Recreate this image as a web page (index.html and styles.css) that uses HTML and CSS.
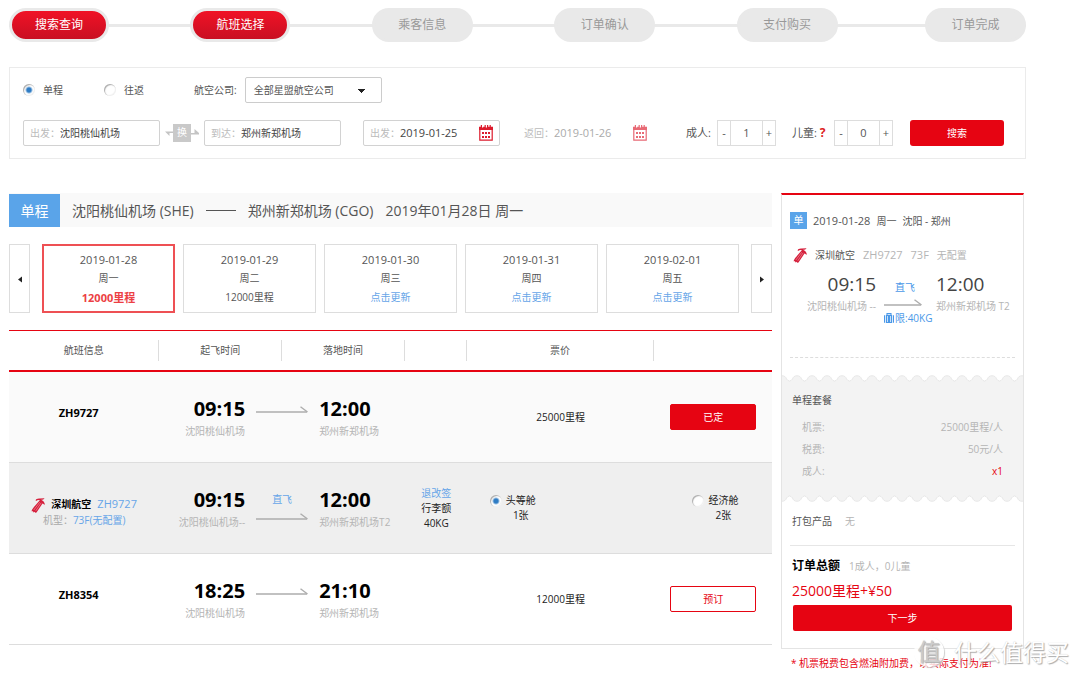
FILE: index.html
```html
<!DOCTYPE html>
<html lang="zh-CN">
<head>
<meta charset="utf-8">
<title>航班选择</title>
<link rel="stylesheet" href="styles.css">
</head>
<body>
<svg class="defs" aria-hidden="true">
  <symbol id="arrow" viewBox="0 0 52 8" preserveAspectRatio="xMaxYMid slice"><path d="M0 6h51" stroke="#adadad" stroke-width="1.6"/><path d="M44.500 .8l7 5.200" stroke="#adadad" stroke-width="1.400"/></symbol>
  <symbol id="logo" viewBox="0 0 14 15"><path d="M5 3C4 1.500 6 .3 8.500 .5L13.500 .3C13 1.500 11.500 1.800 10 1.800 12 2.500 14 4.500 13.800 6.800 13 6.500 12.500 5.800 11.500 5.500L5.500 14.500 4 14.800 3.800 13.800 2.500 14.500 2 13.200.5 13.300C1 11 3 9 4.500 7.200L8.800 2.200C7.500 1.800 6.200 2.200 5 3Z" fill="#d5203c"/><path d="M8.800 4.200L2.800 12M10.200 4.800L4.800 12.800" stroke="#f4a5af" stroke-width=".6"/></symbol>
  <symbol id="cal" viewBox="0 0 14 16"><path d="M.8 4v11.200h12.400V4" fill="none" stroke="#dc1b2c" stroke-width="1.200"/><path d="M0 1.800h1.800V0h1.200v2.500h1.200V1.800h1.400V0h1.200v2.500H8V0h1.200v1.800h1.400V0h1.200v1.800H14V5H0z" fill="#dc1b2c"/><path d="M3 7h2v2H3zM6 7h2v2H6zM9 7h2v2H9zM3 11h2v2H3zM6 11h2v2H6zM9 11h2v2H9z" fill="#dc1b2c"/></symbol>
</svg>
<div class="page">
  <ol class="steps">
    <li class="step done">搜索查询</li>
    <li class="step done">航班选择</li>
    <li class="step">乘客信息</li>
    <li class="step">订单确认</li>
    <li class="step">支付购买</li>
    <li class="step last">订单完成</li>
  </ol>

  <form class="search">
    <div class="search-row">
      <label class="trip"><input class="radio" type="radio" name="trip" checked>单程</label>
      <label class="trip"><input class="radio" type="radio" name="trip">往返</label>
      <label class="airline-label" for="airline">航空公司:</label>
      <select id="airline" class="airline"><option>全部星盟航空公司</option></select>
    </div>
    <div class="search-row">
      <label class="field"><span>出发：</span><input type="text" value="沈阳桃仙机场"></label>
      <button class="swap" type="button"><svg viewBox="0 0 8 8"><path d="M0 2.500h8V4H4.500V7z"/></svg><span>换</span><svg viewBox="0 0 8 8"><path d="M0 4h3.500V0L8 4v1.500H0z"/></svg></button>
      <label class="field"><span>到达：</span><input type="text" value="郑州新郑机场"></label>
      <label class="field depart"><span>出发：</span><input class="date" type="text" value="2019-01-25"><svg class="cal"><use href="#cal"/></svg></label>
      <label class="field return"><span>返回：</span><input class="date" type="text" value="2019-01-26" disabled><svg class="cal"><use href="#cal"/></svg></label>
      <label class="count-label" for="adults">成人:</label>
      <div class="stepper"><button type="button">-</button><input id="adults" type="text" value="1"><button type="button">+</button></div>
      <label class="count-label child" for="children">儿童: <b>?</b></label>
      <div class="stepper"><button type="button">-</button><input id="children" type="text" value="0"><button type="button">+</button></div>
      <button class="submit" type="submit">搜索</button>
    </div>
  </form>

  <div class="content">
    <main class="results">
      <h1 class="route"><span class="route-tag">单程</span><span>沈阳桃仙机场 (SHE)</span><i class="dash"></i><span>郑州新郑机场 (CGO)</span><span>2019年01月28日 周一</span></h1>

      <div class="dates">
        <button class="page-btn" type="button" aria-label="前一周"><svg viewBox="0 0 4 6"><path d="M4 0v6L0 3z"/></svg></button>
        <div class="days">
          <button class="day active" type="button"><span>2019-01-28</span>周一<b>12000里程</b></button>
          <button class="day" type="button"><span>2019-01-29</span>周二<em>12000里程</em></button>
          <button class="day" type="button"><span>2019-01-30</span>周三<em class="blue">点击更新</em></button>
          <button class="day" type="button"><span>2019-01-31</span>周四<em class="blue">点击更新</em></button>
          <button class="day" type="button"><span>2019-02-01</span>周五<em class="blue">点击更新</em></button>
        </div>
        <button class="page-btn" type="button" aria-label="后一周"><svg viewBox="0 0 4 6"><path d="M0 0v6l4-3z"/></svg></button>
      </div>

      <table class="flights">
        <colgroup><col class="c-info"><col class="c-time"><col class="c-time"><col class="c-bag"><col class="c-price"><col class="c-act"></colgroup>
        <thead>
          <tr><th><span>航班信息</span></th><th><span>起飞时间</span></th><th><span>落地时间</span></th><th><span>&nbsp;</span></th><th><span>票价</span></th><th></th></tr>
        </thead>
        <tbody>
          <tr class="chosen">
            <td class="number">ZH9727</td>
            <td colspan="2"><div class="leg"><div class="dep"><b>09:15</b>沈阳桃仙机场</div><div class="mid"><svg class="arrow"><use href="#arrow"/></svg></div><div class="arr"><b>12:00</b>郑州新郑机场</div></div></td>
            <td></td>
            <td class="price">25000里程</td>
            <td><button class="book solid" type="button">已定</button></td>
          </tr>
          <tr class="detail">
            <td class="plane"><svg class="logo"><use href="#logo"/></svg><strong>深圳航空</strong><a href="#">ZH9727</a><div>机型：<a href="#">73F(无配置)</a></div></td>
            <td colspan="2"><div class="leg"><div class="dep"><b>09:15</b>沈阳桃仙机场--</div><div class="mid direct"><span>直飞</span><svg class="arrow"><use href="#arrow"/></svg></div><div class="arr"><b>12:00</b>郑州新郑机场T2</div></div></td>
            <td class="bag"><a href="#">退改签</a><br>行李额<br>40KG</td>
            <td class="cabin first"><label><input class="radio" type="radio" name="cabin" checked><span>头等舱<br>1张</span></label></td>
            <td class="cabin"><label><input class="radio" type="radio" name="cabin"><span>经济舱<br>2张</span></label></td>
          </tr>
          <tr>
            <td class="number">ZH8354</td>
            <td colspan="2"><div class="leg"><div class="dep"><b>18:25</b>沈阳桃仙机场</div><div class="mid"><svg class="arrow"><use href="#arrow"/></svg></div><div class="arr"><b>21:10</b>郑州新郑机场</div></div></td>
            <td></td>
            <td class="price">12000里程</td>
            <td><button class="book" type="button">预订</button></td>
          </tr>
        </tbody>
      </table>
    </main>

    <aside class="side">
      <section class="summary">
        <div class="sum-head"><span class="tag">单</span><span class="num">2019-01-28</span><span>周一</span><span>沈阳 - 郑州</span></div>
        <div class="sum-air"><svg class="logo"><use href="#logo"/></svg><span class="name">深圳航空</span><span class="num">ZH9727</span><span class="num">73F</span><span>无配置</span></div>
        <div class="sum-leg">
          <div class="dep"><b>09:15</b>沈阳桃仙机场 --</div>
          <div class="mid"><span>直飞</span><svg class="arrow"><use href="#arrow"/></svg><span class="limit"><svg viewBox="0 0 10 10"><path d="M3 2V.6h4V2" fill="none" stroke="#4a98e8" stroke-width="1.100"/><path d="M0 3q0-1 1-1v8q-1 0-1-1zM1.800 2h6.400v8H1.800zM9 2q1 0 1 1v6q0 1-1 1z" fill="#4a98e8"/><path d="M3.500 3v6M6.500 3v6" stroke="#fff" stroke-width=".7"/></svg>限:40KG</span></div>
          <div class="arr"><b>12:00</b>郑州新郑机场 T2</div>
        </div>
        <hr class="dashed">
        <svg class="wave"><defs><pattern id="scallop" width="15" height="7" patternUnits="userSpaceOnUse"><path d="M-1 .6C2.500 .6 4 2 4.500 4Q7.500 8 10.500 4C11 2 12.500 .6 16 .6V9H-1Z" fill="#f3f3f3" stroke="#e2e2e2" stroke-width=".8"/></pattern></defs><rect width="100%" height="7" fill="url(#scallop)"/></svg>
        <div class="package">
          <h2>单程套餐</h2>
          <dl>
            <div><dt>机票:</dt><dd>25000里程/人</dd></div>
            <div><dt>税费:</dt><dd>50元/人</dd></div>
            <div><dt>成人:</dt><dd class="red">x1</dd></div>
          </dl>
        </div>
        <svg class="wave flip"><rect width="100%" height="7" fill="url(#scallop)"/></svg>
        <p class="extras">打包产品<span>无</span></p>
        <hr class="solid-line">
        <p class="total"><strong>订单总额</strong><span>1成人，0儿童</span></p>
        <p class="amount">25000里程+¥50</p>
        <button class="next" type="button">下一步</button>
      </section>
      <p class="note">* 机票税费包含燃油附加费，以实际支付为准!</p>
    </aside>
  </div>
</div>
<div class="watermark"><span class="seal">值</span><span>什么值得买</span></div>
</body>
</html>
```
FILE: styles.css
```css
* { box-sizing: border-box; }
body {
  margin: 0;
  position: relative;
  background: #fff;
  color: #555;
  font: 10px/16px "Open Sans", "Noto Sans CJK SC", sans-serif;
}
button, input, select { font: inherit; color: inherit; margin: 0; padding: 0; border: 0; background: none; }
button { cursor: pointer; }
a { color: #66a5e8; text-decoration: none; }
p, h1, h2, dl, dd, ol { margin: 0; padding: 0; }
em { font-style: normal; }
.defs { position: absolute; width: 0; height: 0; }
.page { padding: 8px 54px 0 9px; }
.blue { color: #66a5e8; }

/* progress */
.steps { display: flex; justify-content: space-between; list-style: none; background: linear-gradient(#e9e9e9, #e9e9e9) center / 100% 3px no-repeat; }
.step { width: 101px; height: 34px; border: 3px solid #e9e9e9; border-radius: 17px; background: #e9e9e9; color: #999; font-size: 12px; line-height: 28px; text-align: center; }
.step.done { width: 100px; background: linear-gradient(#f01226, #c90f22); color: #fff; }
.step.last { margin-left: 6px; }

/* search */
.search { margin-top: 25px; padding: 9px 21px 12px 13px; border: 1px solid #ebebeb; }
.search-row { display: flex; align-items: center; }
.search-row + .search-row { margin-top: 17px; }
.radio { appearance: none; flex: none; width: 12px; height: 12px; border-radius: 50%; background: #fff; box-shadow: inset 1px 1px 1px #aaa, inset -1px -1px 1px #f0f0f0; }
.radio:checked { background: radial-gradient(circle, #2f7cc4 0 2px, #fff 4px); }
.trip { display: flex; align-items: center; gap: 8px; width: 81px; }
.airline-label { margin: 0 8px 0 9px; }
.airline { appearance: none; width: 137px; height: 26px; padding: 0 8px; border: 1px solid #ccc; border-radius: 2px; background: linear-gradient(to bottom right, #222 50%, transparent 50%) 116px 11px / 4px 4px no-repeat, linear-gradient(to bottom left, #222 50%, transparent 50%) 112px 11px / 4px 4px no-repeat; }
.field { display: flex; align-items: center; width: 137px; height: 26px; padding: 0 6px; border: 1px solid #d2d2d2; border-radius: 2px; color: #bbb; }
.field span { flex: none; width: 30px; }
.field input { flex: 1; min-width: 0; color: #444; }
.field .date, .num, .day span { font-size: 11px; }
.cal { flex: none; width: 14px; height: 16px; }
.depart { margin-left: 22px; }
.return { margin-left: 17px; border-color: transparent; }
.return input { color: #aaa; }
.return .cal { opacity: .65; }
.swap { display: flex; align-items: center; width: 44px; justify-content: center; }
.swap span { width: 18px; height: 18px; background: #c9c9c9; color: #fff; line-height: 17px; }
.swap svg { width: 8px; height: 8px; fill: #c4c4c4; }
.count-label { width: 31px; margin-left: 32px; font-size: 11px; white-space: nowrap; }
.count-label.child { width: 42px; margin-left: 16px; }
.count-label b { color: #dd2222; font-size: 12px; }
.stepper { display: flex; width: 59px; height: 26px; border: 1px solid #ddd; font-size: 11px; }
.stepper button { width: 12px; }
.stepper input { flex: 1; min-width: 0; border: solid #ddd; border-width: 0 1px; text-align: center; }
.submit { width: 94px; height: 26px; margin-left: auto; border-radius: 3px; background: #e60412; color: #fff; }

/* results */
.content { display: flex; align-items: flex-start; gap: 9px; margin: 34px 2px 0 0; }
.results { flex: 1; min-width: 0; }
.route { display: flex; align-items: center; height: 34px; gap: 12px; background: #f9f9f9; font-size: 14px; line-height: 33px; font-weight: 400; }
.route-tag { width: 51px; background: #5aa4e9; color: #fff; text-align: center; }
.dash { width: 30px; border-top: 1px solid #555; }
.dates { display: flex; gap: 12px; height: 69px; margin-top: 17px; }
.page-btn { flex: none; width: 21px; border: 1px solid #ddd; }
.page-btn svg { width: 4px; height: 7px; fill: #222; }
.days { flex: 1; display: grid; grid-template-columns: repeat(5, 1fr); gap: 8px; }
.day { border: 1px solid #ddd; line-height: 19px; }
.day span, .day em, .day b { display: block; }
.day.active { border: 2px solid #ee5054; }
.day b { color: #ec3f44; font-size: 11px; }

.flights { width: 100%; margin-top: 17px; table-layout: fixed; border-collapse: separate; border-spacing: 0; border-top: 1px solid #e60412; }
.c-info { width: 19.7%; }
.c-time { width: 16.1%; }
.c-bag { width: 8.1%; }
.c-price { width: 24.6%; }
.c-act { width: 15.4%; }
.flights th { padding: 9px 0; border-bottom: 2px solid #e60412; font-weight: 400; }
.flights th span { display: block; line-height: 21px; border-right: 1px solid #ddd; }
.flights td { height: 91px; padding: 0; border-bottom: 1px solid #ddd; text-align: center; color: #222; }
.chosen { background: #fafafa; }
.detail { background: #efefef; }
.flights .number { padding: 0 11px 8px 0; color: #000; font-size: 11px; font-weight: 700; }
.leg { display: grid; grid-template-columns: 1fr 52px 1fr; gap: 11px; color: #b5b5b5; white-space: nowrap; }
.dep { text-align: right; }
.arr { text-align: left; }
.leg b { display: block; color: #000; font-size: 20px; line-height: 28px; }
.arrow { display: block; width: 52px; height: 8px; }
.leg .mid { padding-top: 11px; }
.leg .direct { padding-top: 5px; color: #66a5e8; }
.direct .arrow { margin-top: 6px; }
.flights .plane { padding: 8px 0 0; line-height: 15px; }
.logo { width: 14px; height: 15px; vertical-align: middle; }
.plane strong { margin: 0 6px; color: #000; }
.plane a { font-size: 11px; }
.plane div { color: #aaa; }
.plane div a { font-size: 10px; }
.flights .bag { line-height: 15px; padding-left: 1px; }
.cabin label { display: flex; gap: 4px; margin-left: 38px; line-height: 15px; }
.first label { margin-left: 23px; }
.cabin .radio { margin-top: 2px; }
.book { width: 86px; height: 26px; border: 1px solid #e60412; border-radius: 2px; color: #e60412; }
.book.solid { background: #e60412; color: #fff; }

/* order summary */
.side { flex: none; width: 243px; }
.summary { border: 1px solid #e4e4e4; border-top: 2px solid #e60412; padding: 17px 0; }
.sum-head { display: flex; align-items: center; gap: 6px; height: 17px; padding-left: 8px; }
.tag { width: 17px; background: #5aa4e9; color: #fff; line-height: 17px; text-align: center; }
.sum-air { display: flex; align-items: center; gap: 8px; margin-top: 18px; padding-left: 11px; color: #b5b5b5; }
.sum-air .name { color: #555; }
.sum-leg { display: grid; grid-template-columns: 94fr 60px 87fr; margin-top: 9px; color: #b5b5b5; white-space: nowrap; }
.sum-leg b { display: block; margin-bottom: 2px; color: #444; font-size: 19px; font-weight: 400; line-height: 24px; }
.sum-leg .mid { padding: 7px 0 0 8px; color: #4a98e8; }
.sum-leg .mid span { display: block; padding-left: 11px; }
.sum-leg .arrow { width: 38px; margin-top: 4px; }
.sum-leg .mid .limit { display: flex; align-items: center; gap: 1px; margin-top: 3px; padding: 0; }
.limit svg { width: 10px; height: 10px; }
hr { margin: 0 8px; border: 0; }
.dashed { margin-top: 31px; border-top: 1px dashed #ddd; }
.wave { display: block; width: 100%; height: 7px; margin-top: 17px; }
.wave.flip { margin-top: 0; transform: scaleY(-1); }
.package { padding: 10px 20px 13px 10px; background: #f3f3f3; }
.package h2 { font-size: 10px; font-weight: 400; }
.package dl { margin: 8px 0 0 10px; color: #b5b5b5; line-height: 22px; }
.package dl div { display: flex; justify-content: space-between; }
.package .red { color: #e60412; }
.extras { margin-top: 11px; padding-left: 10px; }
.extras span { margin-left: 13px; color: #b5b5b5; }
.solid-line { margin-top: 16px; border-top: 1px solid #e6e6e6; }
.total { margin-top: 10px; padding-left: 10px; color: #b5b5b5; line-height: 20px; }
.total strong { margin-right: 9px; color: #000; font-size: 12px; }
.amount { margin-top: 5px; padding-left: 10px; color: #e60412; font-size: 14px; line-height: 20px; }
.next { display: block; width: calc(100% - 22px); height: 26px; margin: 4px 11px 0; border-radius: 2px; background: #e60412; color: #fff; }
.note { margin-top: 6px; padding-left: 10px; color: #e60412; white-space: nowrap; }

.watermark { position: absolute; right: 11px; top: 636px; display: flex; align-items: center; gap: 10px; color: #fff; font-size: 23px; line-height: 32px; text-shadow: 1px 1px 1px #aaa, 0 0 1px #ccc; }
.seal { width: 30px; height: 30px; border-radius: 50%; background: #ffffffcc; box-shadow: 1px 1px 1px #ccc; color: #ccc; line-height: 28px; text-align: center; }
```
